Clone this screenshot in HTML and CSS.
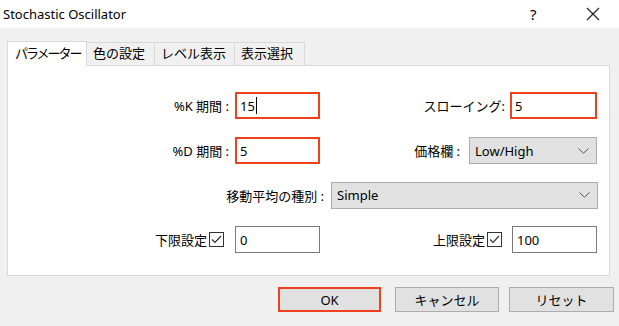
FILE: index.html
```html
<!DOCTYPE html>
<html>
<head>
<meta charset="utf-8">
<title>Stochastic Oscillator</title>
<link rel="stylesheet" href="styles.css">
</head>
<body>
<div class="dlg">
	<div class="dlg-title">
		<span class="dlg-name">Stochastic Oscillator</span>
		<span class="dlg-help">?</span>
		<span class="dlg-close"><svg width="14" height="14" viewBox="0 0 14 14"><path d="M1 1L13 13M13 1L1 13" stroke="#222" stroke-width="1.2" fill="none"/></svg></span>
	</div>
	<div class="dlg-body">
		<div class="tabs">
			<div class="tab tab-on">パラメーター</div>
			<div class="tab">色の設定</div>
			<div class="tab">レベル表示</div>
			<div class="tab">表示選択</div>
		</div>
		<div class="panel">
			<div class="row">
				<div class="lbl w1">%K 期間 :</div>
				<div class="inp hl">15<span class="caret"></span></div>
				<div class="lbl w2">スローイング:</div>
				<div class="inp hl wide">5</div>
			</div>
			<div class="row">
				<div class="lbl w1">%D 期間 :</div>
				<div class="inp hl">5</div>
				<div class="lbl w3">価格欄 :</div>
				<div class="sel sel-s">Low/High<svg class="chev" width="11" height="6" viewBox="0 0 11 6"><path d="M0.5 0.5L5.5 5.2L10.5 0.5" stroke="#555" fill="none"/></svg></div>
			</div>
			<div class="row">
				<div class="lbl w4">移動平均の種別 :</div>
				<div class="sel sel-l">Simple<svg class="chev" width="11" height="6" viewBox="0 0 11 6"><path d="M0.5 0.5L5.5 5.2L10.5 0.5" stroke="#555" fill="none"/></svg></div>
			</div>
			<div class="row">
				<div class="lbl w5">下限設定<span class="chk"><svg width="13" height="13" viewBox="0 0 13 13"><path d="M2 6.5L5 9.5L11 3" stroke="#333" stroke-width="1.2" fill="none"/></svg></span></div>
				<div class="inp">0</div>
				<div class="lbl w6">上限設定<span class="chk"><svg width="13" height="13" viewBox="0 0 13 13"><path d="M2 6.5L5 9.5L11 3" stroke="#333" stroke-width="1.2" fill="none"/></svg></span></div>
				<div class="inp">100</div>
			</div>
		</div>
		<div class="btns">
			<button type="button" class="btn btn-ok">OK</button>
			<button type="button" class="btn btn-cancel">キャンセル</button>
			<button type="button" class="btn btn-reset">リセット</button>
		</div>
	</div>
</div>
</body>
</html>
```
FILE: styles.css
```css
*{margin: 0;padding: 0;box-sizing: border-box;}
html,body{height: 100%;}
body{font: 13px "Noto Sans","Noto Sans CJK JP",sans-serif;color: #000;background-color: #f0f0f0;}
.dlg{width: 619px;height: 326px;}
.dlg-title{height: 28px;background-color: #fff;display: flex;align-items: center;padding: 0 0 0 3px;}
.dlg-name{flex: 1;font-size: 13px;}
.dlg-help{width: 16px;font-size: 15px;margin-right: 40px;}
.dlg-close{width: 14px;height: 14px;margin-right: 19px;display: flex;}
.dlg-body{padding: 12px 9px 0 7px;}
.tabs{display: flex;align-items: flex-end;height: 25px;}
.tab{height: 23px;line-height: 21px;padding: 0 0 0 6px;border: 1px solid #d9d9d9;border-bottom: 0;border-left: 0;background-color: #f0f0f0;font-size: 13px;white-space: nowrap;overflow: hidden;}
.tab:nth-child(2){width: 68px;}
.tab:nth-child(3){width: 80px;}
.tab:nth-child(4){width: 70px;}
.tab-on{width: 80px;height: 25px;line-height: 23px;background-color: #fff;border-left: 1px solid #d9d9d9;padding-left: 7px;letter-spacing: -2px;position: relative;top: 1px;}
.panel{height: 211px;background-color: #fff;border: 1px solid #d9d9d9;padding: 26px 0 0 0;}
.row{display: flex;align-items: center;height: 27px;margin-bottom: 18px;}
.row:nth-child(3){height: 26px;margin-bottom: 18px;}
.lbl{display: flex;justify-content: flex-end;align-items: center;white-space: nowrap;}
.w1{width: 221px;margin-right: 6px;}
.w2{width: 185px;margin-right: 5px;}
.w3{width: 140px;margin-right: 9px;}
.w4{width: 316px;margin-right: 7px;}
.w5{width: 216px;margin-right: 11px;}
.w6{width: 182px;margin-right: 10px;}
.inp{width: 85px;height: 27px;border: 1px solid #7a7a7a;padding: 0 4px;line-height: 22px;display: flex;align-items: center;}
.inp.hl{border: 2px solid #f0401e;padding: 0 3px;}
.inp.wide{width: 87px;}
.caret{display: inline-block;width: 1px;height: 17px;background-color: #000;margin-left: 1px;}
.sel{height: 27px;border: 1px solid #adadad;background-color: #e1e1e1;display: flex;align-items: center;padding: 0 7px 0 5px;justify-content: space-between;}
.sel-s{width: 128px;}
.sel-l{width: 267px;}
.chk{display: inline-flex;align-items: center;justify-content: center;width: 15px;height: 15px;border: 1px solid #333;background-color: #fff;margin-left: 2px;}
.btns{display: flex;justify-content: flex-end;padding: 11px 0 0 0;margin-right: -4px;}
.btn{height: 25px;border: 1px solid #adadad;background-color: #e1e1e1;font: 13px "Noto Sans","Noto Sans CJK JP",sans-serif;color: #000;}
.btn-ok{width: 103px;border: 2px solid #f0401e;margin-right: 14px;}
.btn-cancel{width: 104px;margin-right: 10px;}
.btn-reset{width: 105px;}
```
